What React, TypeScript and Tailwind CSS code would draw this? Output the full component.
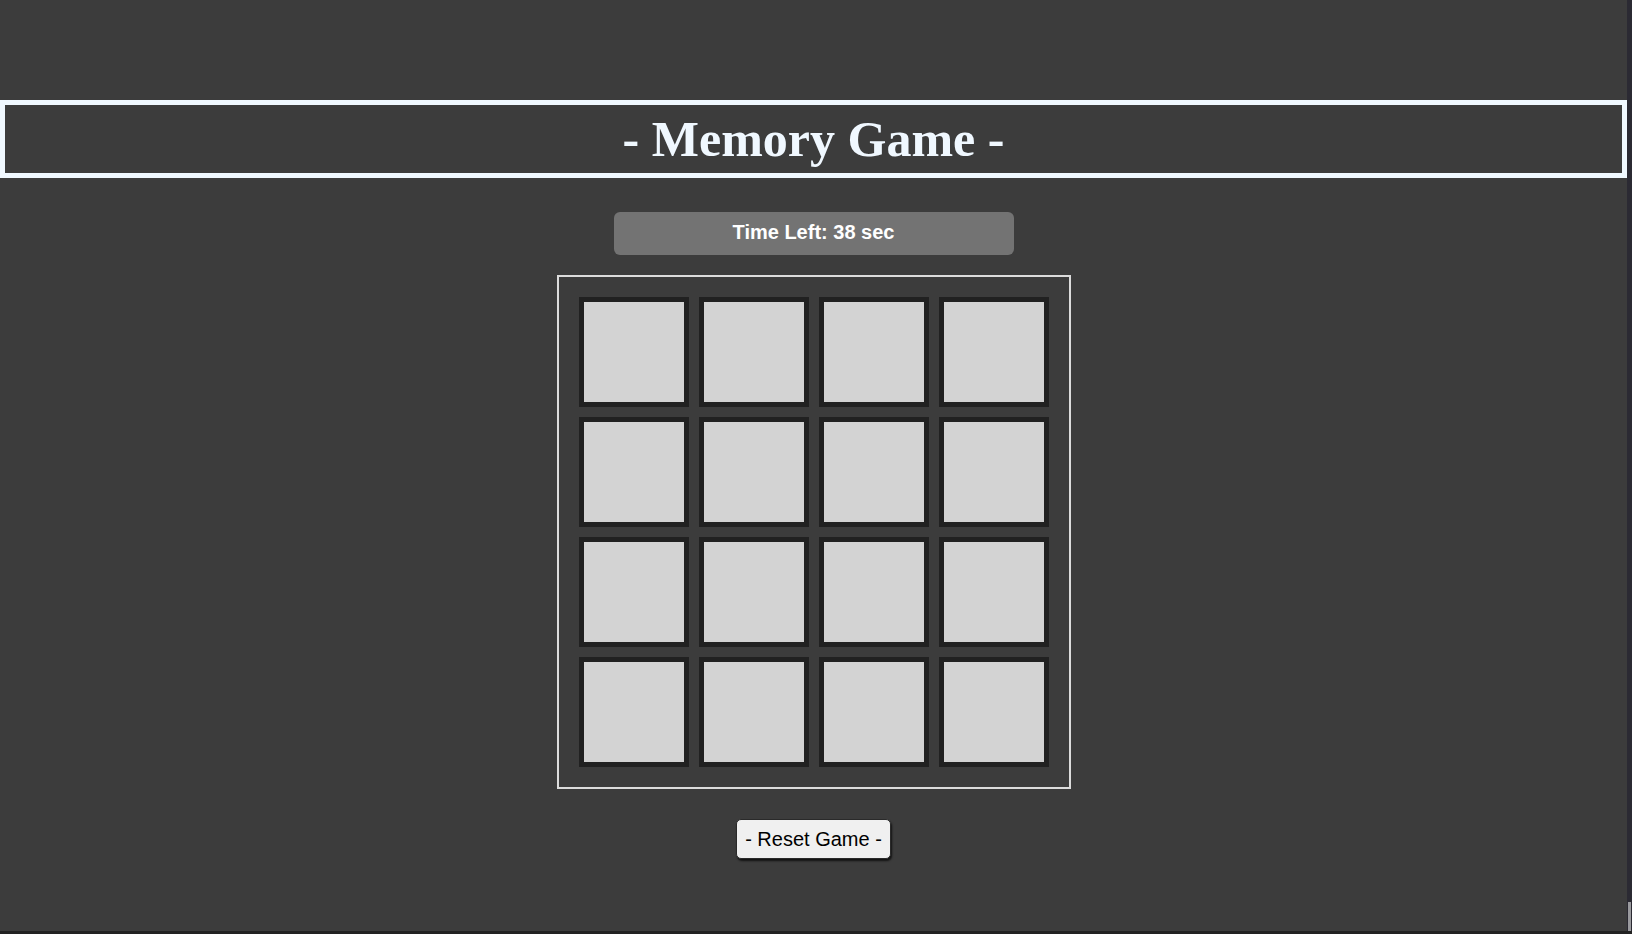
import React from "react";

export default function App() {
  const cards = Array.from({ length: 16 }, (_, i) => i);
  return (
    <div className="flex flex-col h-[934px] w-full overflow-hidden bg-[#3c3c3c]">
      <div className="flex flex-row h-[931px]">
        <div className="flex-1 flex flex-col items-center pt-[100px]">
          <div className="w-full h-[78px] border-[5px] border-[#f0f8ff] flex items-center justify-center">
            <h1
              className="text-[50px] font-bold leading-[56px] text-[#f0f8ff] m-0"
              style={{ fontFamily: '"Liberation Serif", "Times New Roman", serif' }}
            >
              - Memory Game -
            </h1>
          </div>
          <div
            className="mt-[34px] w-[400px] h-[43px] pb-[3px] rounded-[6px] bg-[#737373] flex items-center justify-center text-white text-[20px] font-bold"
            style={{ fontFamily: '"Liberation Sans", Arial, sans-serif' }}
          >
            Time Left: 38 sec
          </div>
          <div className="mt-[20px] w-[514px] h-[514px] border-2 border-[#dcdcdc] p-[20px] grid grid-cols-4 gap-[10px]">
            {cards.map((i) => (
              <div
                key={i}
                className="w-[110px] h-[110px] border-[5px] border-[#212121] bg-[#d3d3d3]"
              />
            ))}
          </div>
          <button
            className="mt-[30px] h-[40px] px-[8px] pb-[1px] bg-[#f0f0f0] text-black text-[20px] rounded-[5px] border border-[#2a2a2a] shadow-[1px_2px_2px_rgba(0,0,0,0.7)] flex items-center"
            style={{ fontFamily: '"Liberation Sans", Arial, sans-serif' }}
          >
            - Reset Game -
          </button>
        </div>
        <div className="w-[5px] h-full bg-[#2b2a33] flex flex-col justify-end items-end">
          <div className="w-[3px] h-[29px] bg-[#9a9a9e] mr-[1px]" />
        </div>
      </div>
      <div className="h-[3px] bg-[#222222]" />
    </div>
  );
}
